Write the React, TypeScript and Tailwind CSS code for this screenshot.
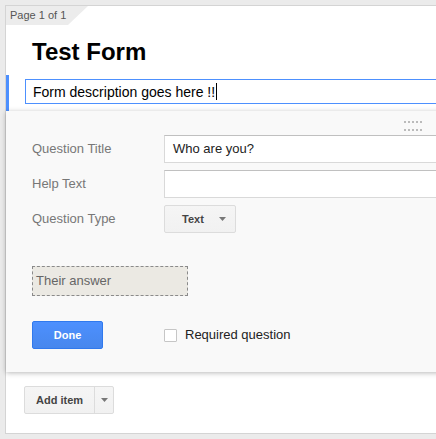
import React from "react";

const font = "font-['Liberation_Sans',Arial,sans-serif]";

function Caret() {
  return (
    <svg width="7" height="4" viewBox="0 0 7 4" className="block">
      <path d="M0 0 L7 0 L3.5 4 Z" fill="#777" />
    </svg>
  );
}

function DragHandle() {
  return (
    <div className="grid grid-cols-5 gap-x-[2px] gap-y-[1px]">
      {Array.from({ length: 10 }).map((_, i) => (
        <span key={i} className="block w-[2px] h-[2px] bg-[#bbb]" />
      ))}
    </div>
  );
}

function FieldRow({ label, children }: { label: string; children: React.ReactNode }) {
  return (
    <div className="flex items-center h-[28px]">
      <div className="w-[132px] shrink-0 text-[13px] text-[#777]">{label}</div>
      {children}
    </div>
  );
}

export default function App() {
  return (
    <div className={`w-[436px] h-[439px] overflow-hidden bg-[#ebebeb] pl-[5px] pt-[5px] ${font}`}>
      <div className="w-[452px] h-[429px] bg-white border border-[#d4d4d4] flex flex-col">
        {/* page tab */}
        <div className="w-[82px] h-[19px] bg-[#ececec] [clip-path:polygon(0_0,82px_0,62px_19px,0_19px)] pl-[4px] text-[11px] leading-[19px] text-[#555]">
          Page 1 of 1
        </div>

        {/* form title */}
        <h1 className="mt-[13px] pl-[26px] text-[24px] leading-[28px] font-bold text-black">
          Test Form
        </h1>

        {/* description, focused */}
        <div className="mt-[9px] flex h-[36px]">
          <div className="w-[3px] h-full bg-[#4d90fe]" />
          <div className="ml-[16px] mt-[4px] flex-1 h-[25px] p-[1px] bg-[#4d90fe]">
            <div className="h-full bg-white flex items-center pl-[7px] text-[14px] leading-[16px] text-black">
              <span>Form description goes here !!</span>
              <span className="ml-[1px] w-px h-[17px] bg-black" />
            </div>
          </div>
        </div>

        {/* question editor */}
        <div className="bg-[#f9f9f9] shadow-[0_1px_5px_rgba(0,0,0,0.28)] pl-[26px] pb-[23px]">
          <div className="h-[24px] pt-[10px] flex justify-end pr-[34px]">
            <DragHandle />
          </div>

          <div className="flex flex-col gap-[7px]">
            <FieldRow label="Question Title">
              <div className="flex-1 h-[28px] bg-white border border-[#d9d9d9] border-t-[#c0c0c0] flex items-center pl-[8px] text-[13px] text-[#222]">
                Who are you?
              </div>
            </FieldRow>
            <FieldRow label="Help Text">
              <div className="flex-1 h-[28px] bg-white border border-[#d9d9d9] border-t-[#c0c0c0]" />
            </FieldRow>
            <FieldRow label="Question Type">
              <div className="w-[72px] h-[28px] rounded-[2px] border border-[#dcdcdc] bg-gradient-to-b from-[#f5f5f5] to-[#f1f1f1] flex items-center pl-[17px] pr-[5px]">
                <span className="text-[11px] font-bold text-[#444]">Text</span>
                <span className="ml-auto mr-[4px]">
                  <Caret />
                </span>
              </div>
            </FieldRow>
          </div>

          <div className="mt-[33px] w-[156px] h-[30px] border border-dashed border-[#8a8a8a] bg-[#ebe9e3] flex items-center pl-[3px] text-[13px] text-[#666]">
            Their answer
          </div>

          <div className="mt-[25px] flex items-center h-[28px]">
            <div className="w-[132px] shrink-0">
              <button className="w-[71px] h-[28px] rounded-[2px] border border-[#3079ed] bg-gradient-to-b from-[#4d90fe] to-[#4787ed] text-white text-[11px] font-bold">
                Done
              </button>
            </div>
            <span className="w-[13px] h-[13px] rounded-[1px] border border-[#c6c6c6] bg-white" />
            <span className="ml-[8px] text-[13px] text-[#222]">Required question</span>
          </div>
        </div>

        {/* add item */}
        <div className="mt-[14px] ml-[18px] flex">
          <div className="flex h-[28px] rounded-[2px] border border-[#dcdcdc] bg-gradient-to-b from-[#f5f5f5] to-[#f1f1f1]">
            <span className="w-[70px] flex items-center justify-center text-[11px] font-bold text-[#444] border-r border-[#dcdcdc]">
              Add item
            </span>
            <span className="w-[18px] flex items-center justify-center">
              <Caret />
            </span>
          </div>
        </div>
      </div>
    </div>
  );
}
